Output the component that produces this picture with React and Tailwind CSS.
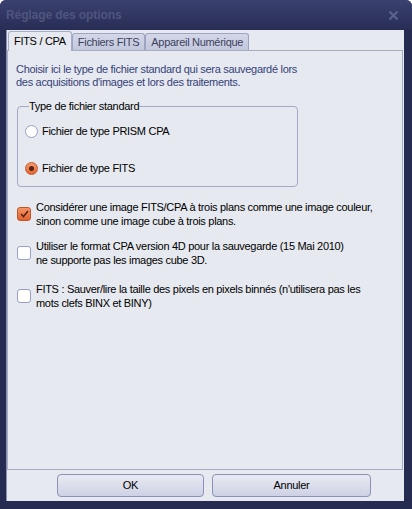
import React from "react";

const font = { fontFamily: '"Liberation Sans", Arial, sans-serif' };

function Radio({ checked }) {
  return checked ? (
    <span className="flex h-[13px] w-[13px] shrink-0 items-center justify-center rounded-full border border-[#c9552a] bg-gradient-to-b from-[#f49a6c] to-[#e2662f]">
      <span className="h-[5px] w-[5px] rounded-full bg-[#5a2414]" />
    </span>
  ) : (
    <span className="h-[13px] w-[13px] shrink-0 rounded-full border border-[#9aa0c2] bg-white" />
  );
}

function Check({ checked }) {
  return checked ? (
    <span className="flex h-[14px] w-[14px] shrink-0 items-center justify-center rounded-[3px] border border-[#c45327] bg-gradient-to-b from-[#f39465] to-[#e2622c]">
      <svg width="9" height="8" viewBox="0 0 9 8">
        <path d="M1 4 L3.5 6.5 L8 1" fill="none" stroke="#5a2212" strokeWidth="1.6" />
      </svg>
    </span>
  ) : (
    <span className="h-[14px] w-[14px] shrink-0 rounded-[3px] border border-[#9aa0c2] bg-white" />
  );
}

function Tab({ label, active }) {
  return active ? (
    <div className="relative z-10 -mb-px flex h-[20px] items-center rounded-t-[3px] border border-b-0 border-[#a8adc6] bg-[#e6e9ef] px-[5px] text-black">
      {label}
    </div>
  ) : (
    <div className="mt-[2px] flex h-[17px] items-center rounded-t-[3px] border border-b-0 border-[#9ea4c2] bg-gradient-to-b from-[#d3d7e8] to-[#c2c7dc] px-[5px] text-[#3c4160]">
      {label}
    </div>
  );
}

function Button({ label, w }) {
  return (
    <button
      className={`flex h-[23px] items-center justify-center rounded-[4px] border border-[#8c92b8] bg-gradient-to-b from-[#e9ebf3] to-[#cdd1e4] text-[11px] tracking-[-0.3px] text-black ${w}`}
      style={font}
    >
      {label}
    </button>
  );
}

export default function App() {
  return (
    <div
      className="flex h-[509px] w-[412px] flex-col overflow-hidden rounded-t-[6px] bg-[#262b52] text-[11px] leading-[13px]"
      style={font}
    >
      {/* title bar */}
      <div className="flex h-[30px] shrink-0 items-center justify-between bg-gradient-to-b from-[#3b416f] to-[#282d55] pl-[6px] pr-[13px]">
        <span className="text-[12px] font-bold tracking-[-0.1px] text-[#4f557f]">Réglage des options</span>
        <svg width="11" height="11" viewBox="0 0 11 11">
          <path d="M1.5 1.5 L9.5 9.5 M9.5 1.5 L1.5 9.5" stroke="#5a618c" strokeWidth="2.4" />
        </svg>
      </div>

      {/* client area */}
      <div className="ml-[6px] mr-[8px] flex flex-1 flex-col border-l border-[#8a90b4] bg-[#e6e9ef] pr-[1px] tracking-[-0.3px]">
        <div className="flex items-end pl-[1px] pt-[1px]">
          <Tab label="FITS / CPA" active />
          <Tab label="Fichiers FITS" />
          <Tab label="Appareil Numérique" />
        </div>

        <div className="flex h-[420px] flex-col border border-[#a8adc6] bg-[#e6e9ef] pl-[8px] pt-[12px]">
          <p className="text-[#35427a]">
            Choisir ici le type de fichier standard qui sera sauvegardé lors
            <br />
            des acquisitions d'images et lors des traitements.
          </p>

          <fieldset className="ml-[1px] mt-[11px] h-[87px] w-[281px] rounded-[4px] border border-[#a3a9c6] pl-[7px]">
            <legend className="ml-[4px] px-0 text-black">Type de fichier standard</legend>
            <div className="mt-[12px] flex items-center gap-[4px]">
              <Radio />
              <span>Fichier de type PRISM CPA</span>
            </div>
            <div className="mt-[24px] flex items-center gap-[4px]">
              <Radio checked />
              <span>Fichier de type FITS</span>
            </div>
          </fieldset>

          <div className="mt-[13px] flex items-center gap-[5px] pl-[1px]">
            <Check checked />
            <span className="leading-[14px]">
              Considérer une image FITS/CPA à trois plans comme une image couleur,
              <br />
              sinon comme une image cube à trois plans.
            </span>
          </div>
          <div className="mt-[11px] flex items-center gap-[5px] pl-[1px]">
            <Check />
            <span className="leading-[14px]">
              Utiliser le format CPA version 4D pour la sauvegarde (15 Mai 2010)
              <br />
              ne supporte pas les images cube 3D.
            </span>
          </div>
          <div className="mt-[15px] flex items-center gap-[5px] pl-[1px]">
            <Check />
            <span className="leading-[14px]">
              FITS : Sauver/lire la taille des pixels en pixels binnés (n'utilisera pas les
              <br />
              mots clefs BINX et BINY)
            </span>
          </div>
        </div>

        <div className="flex flex-1 items-start pl-[50px] pt-[4px]">
          <Button label="OK" w="w-[147px]" />
          <div className="w-[8px]" />
          <Button label="Annuler" w="w-[159px]" />
        </div>
      </div>
      <div className="h-[8px] shrink-0" />
    </div>
  );
}
